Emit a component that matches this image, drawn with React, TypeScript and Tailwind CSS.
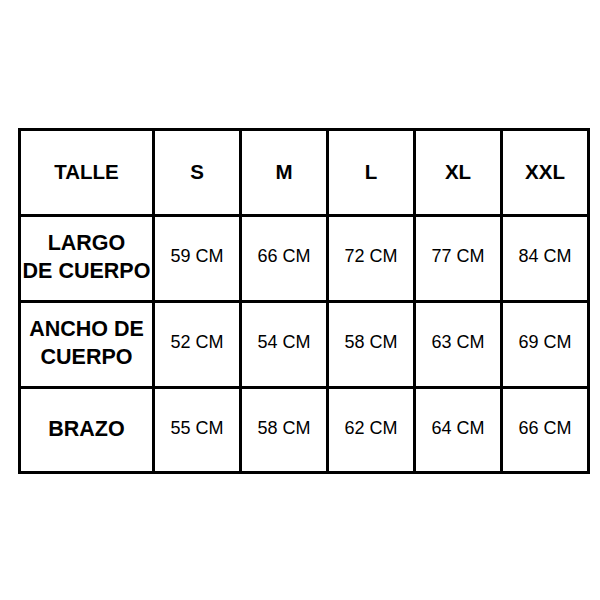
import React from "react";

const sizes = ["S", "M", "L", "XL", "XXL"];
const rows: { label: string[]; values: string[] }[] = [
  { label: ["LARGO", "DE CUERPO"], values: ["59 CM", "66 CM", "72 CM", "77 CM", "84 CM"] },
  { label: ["ANCHO DE", "CUERPO"], values: ["52 CM", "54 CM", "58 CM", "63 CM", "69 CM"] },
  { label: ["BRAZO"], values: ["55 CM", "58 CM", "62 CM", "64 CM", "66 CM"] },
];

export default function App() {
  return (
    <div
      className="w-[600px] h-[600px] bg-white pt-[128px] pl-[18px]"
      style={{ fontFamily: '"Liberation Sans", Arial, sans-serif' }}
    >
      <div className="w-[572px] border-[3px] border-black bg-black grid grid-cols-[131px_84px_84px_84px_84px_84px] grid-rows-[83px_83px_83px_82px] gap-[3px] text-black">
        <div className="bg-white flex items-center justify-center font-bold text-[20.5px]">TALLE</div>
        {sizes.map((s) => (
          <div key={s} className="bg-white flex items-center justify-center font-bold text-[20.5px]">
            {s}
          </div>
        ))}
        {rows.map((r) => (
          <React.Fragment key={r.label.join(" ")}>
            <div className="bg-white flex flex-col items-center justify-center font-bold text-[21.5px] leading-[28px] text-center whitespace-nowrap pb-[3px]">
              {r.label.map((l) => (
                <span key={l}>{l}</span>
              ))}
            </div>
            {r.values.map((v, i) => (
              <div key={i} className="bg-white flex items-center justify-center text-[18px] pb-[4px]">
                {v}
              </div>
            ))}
          </React.Fragment>
        ))}
      </div>
    </div>
  );
}
